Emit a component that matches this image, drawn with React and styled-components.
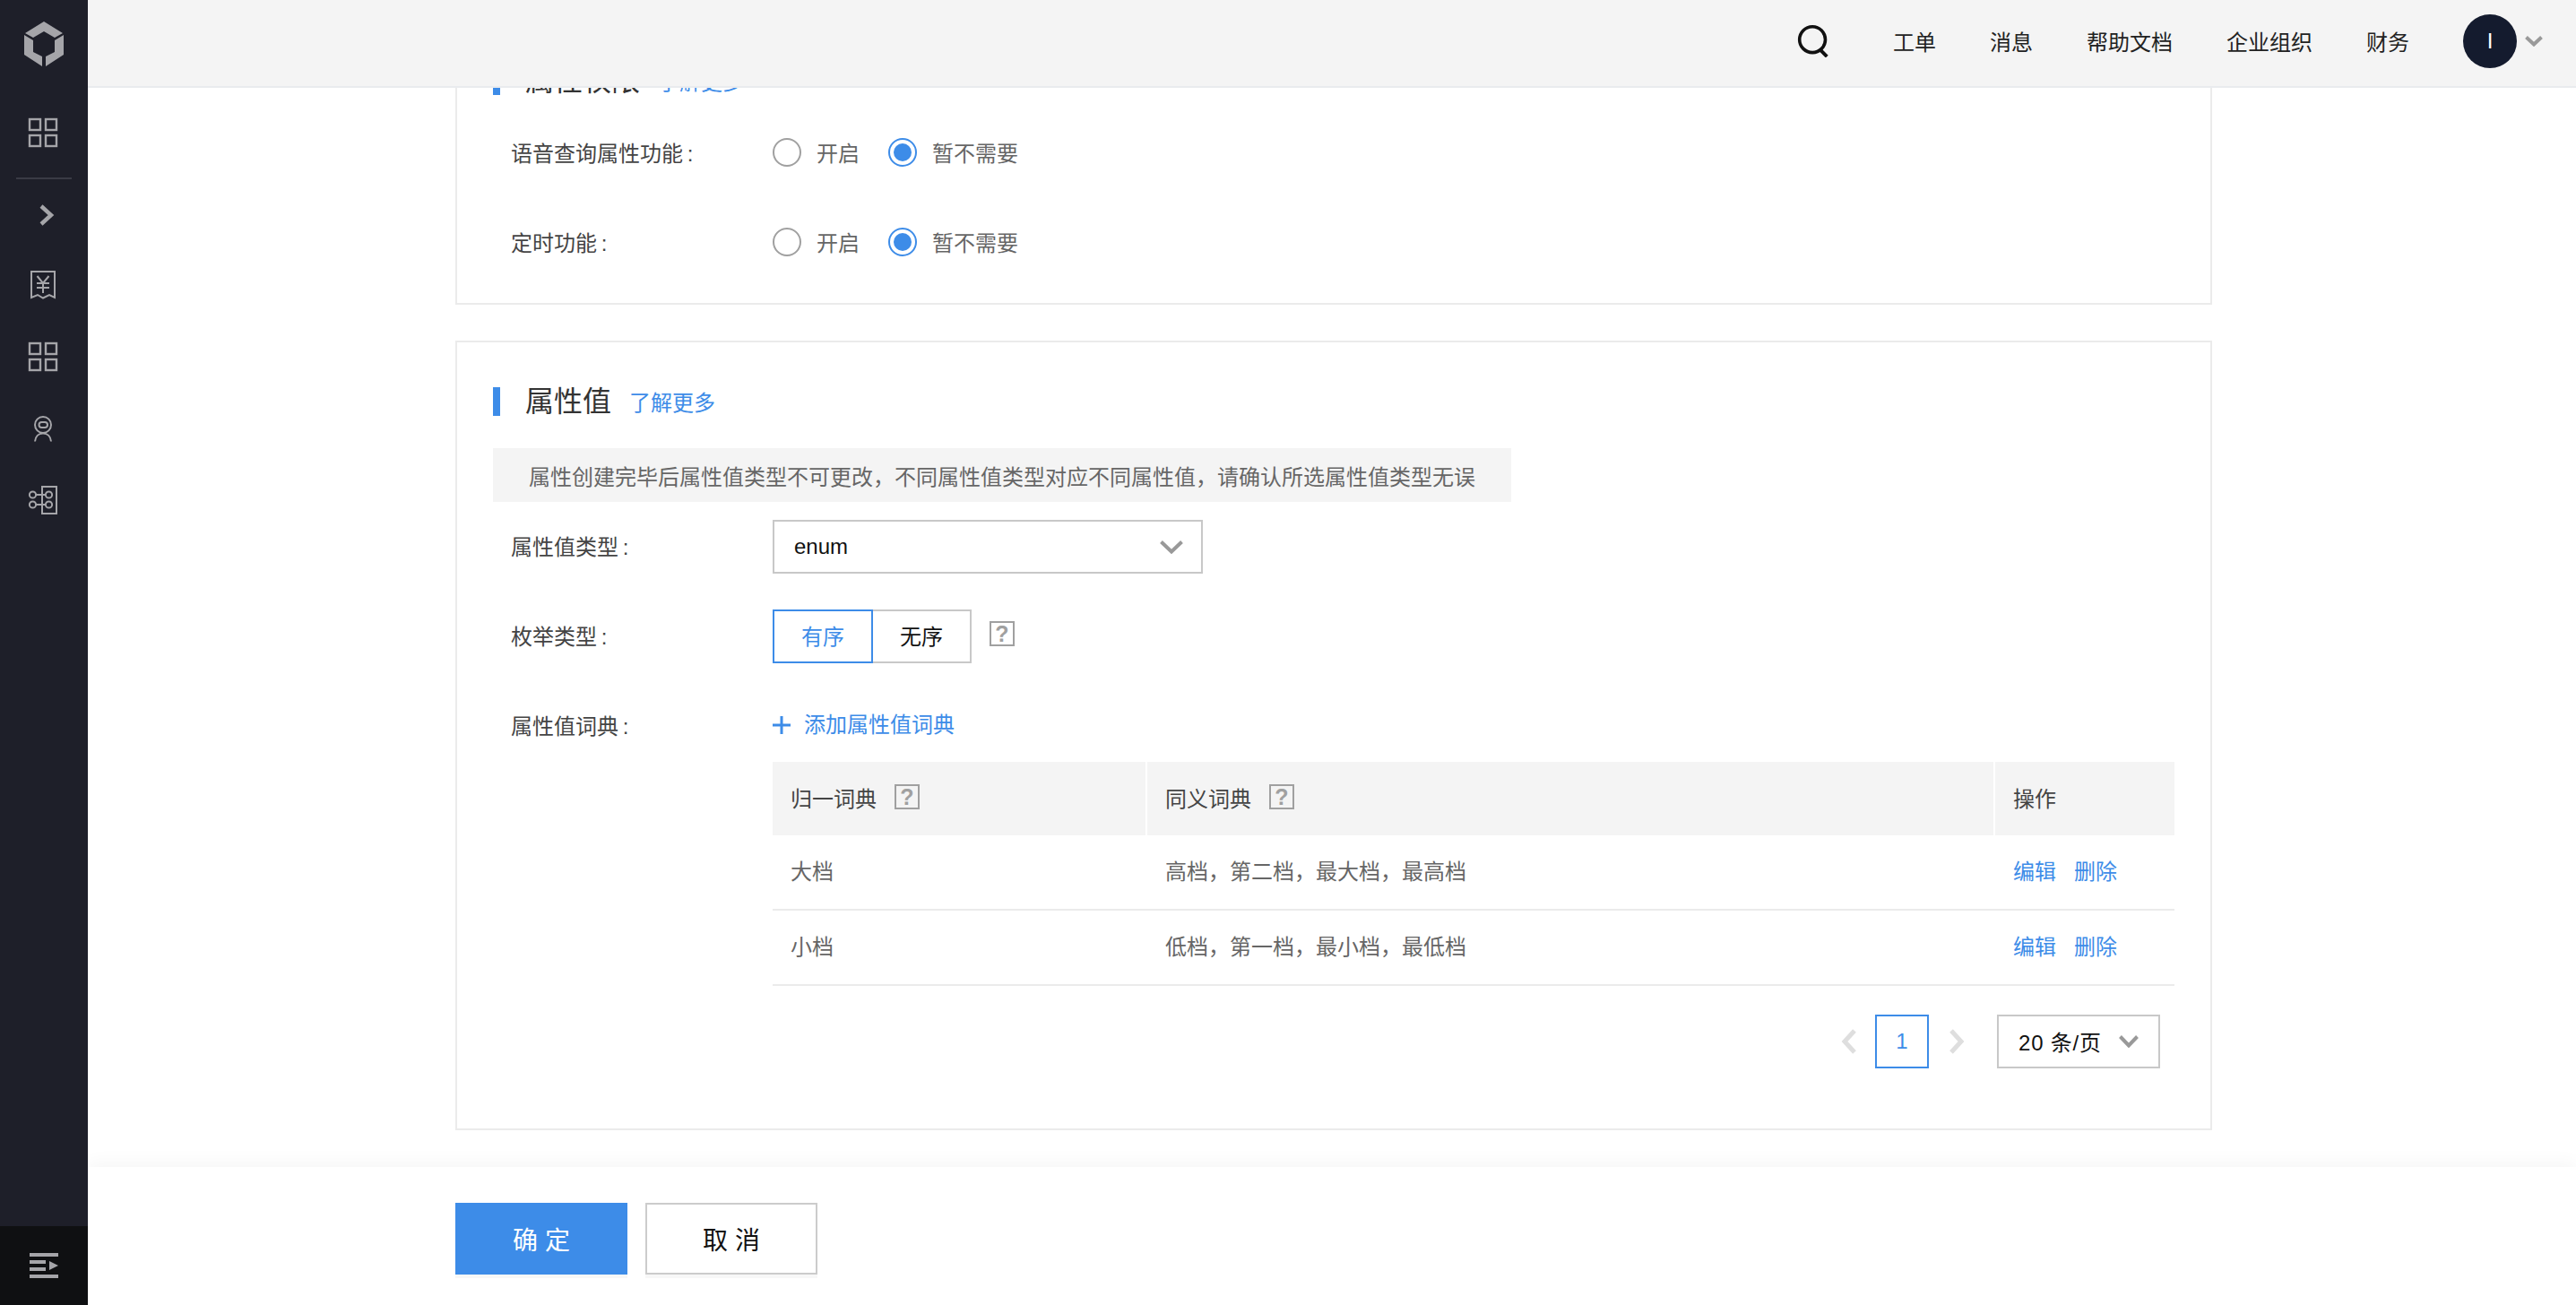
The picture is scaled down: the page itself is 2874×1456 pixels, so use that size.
import React from "react";
import styled, { createGlobalStyle } from "styled-components";

const BLUE = "#3d8ce8";
const COLS = "416px 944px 200px";

const Global = createGlobalStyle`
  html, body { margin: 0; padding: 0; height: 100%; overflow: hidden; background: #fff; }
  body { font-family: "Liberation Sans", "Noto Sans CJK SC", sans-serif; font-size: 24px; color: #333; }
  * { box-sizing: border-box; }
`;

const Shell = styled.div`display: flex; width: 2874px; height: 1456px; overflow: hidden;`;

const Sidebar = styled.aside`
  position: relative; z-index: 2;
  flex: none; width: 98px; height: 100%; background: #1e1f29;
  display: flex; flex-direction: column; color: #a5a5a9;
`;
const LogoBox = styled.div`height: 98px; display: flex; align-items: center; justify-content: center;`;
const SideItem = styled.div`
  height: 80px; flex: none; display: flex; align-items: center; justify-content: center;
  margin-top: ${(p) => p.$top || 0}px;
`;
const SideRule = styled.div`flex: none; height: 2px; margin: 10px 18px 0; background: #3a3b45;`;
const SideBottom = styled.div`
  margin-top: auto; height: 88px; background: #0f1012;
  display: flex; align-items: center; justify-content: center;
`;

const Main = styled.div`flex: 1; min-width: 0; display: flex; flex-direction: column; height: 100%;`;
const Header = styled.header`
  position: relative; z-index: 1; flex: none; height: 98px; background: #f4f4f4; border-bottom: 2px solid #e9ebee;
  display: flex; align-items: center; justify-content: flex-end; padding: 0 37px 4px 0;
`;
const SearchWrap = styled.div`display: flex; margin-right: 71px;`;
const NavList = styled.nav`display: flex; gap: 60px; margin-right: 60px; margin-top: 4px;`;
const NavLink = styled.span`color: #222; font-size: 24px; line-height: 34px;`;
const Avatar = styled.div`
  width: 60px; height: 60px; border-radius: 50%; background: #141b2e; color: #fff;
  display: flex; align-items: center; justify-content: center; font-size: 24px; margin-right: 9px;
`;

const Scroller = styled.main`flex: 1; min-height: 0; overflow: hidden;`;
const Content = styled.div`
  width: 1960px; margin: -76px 0 0 410px;
  display: flex; flex-direction: column; gap: 40px;
`;
const Card = styled.section`
  border: 2px solid #ebebeb; padding: 50px 40px ${(p) => p.$bottom}px 40px;
`;
const TitleRow = styled.div`display: flex; align-items: center; height: 32px; margin-bottom: ${(p) => p.$gap}px;`;
const TitleBar = styled.span`width: 8px; height: 32px; background: ${BLUE}; margin-right: 28px;`;
const Title = styled.h2`margin: 0; font-size: 32px; font-weight: 400; color: #333; line-height: 32px;`;
const TextLink = styled.a`color: ${BLUE}; font-size: 24px; line-height: 34px;`;
const TitleLink = styled(TextLink)`margin: 4px 0 0 20px;`;

const Notice = styled.div`
  width: 1136px; height: 60px; background: #f4f4f4; color: #666; font-size: 24px;
  display: flex; align-items: center; padding-left: 40px; margin-bottom: 20px; white-space: nowrap;
`;
const FormRow = styled.div`
  display: flex; align-items: center; height: 60px;
  margin-bottom: ${(p) => (p.$last ? 10 : 40)}px;
`;
const Label = styled.label`
  flex: none; width: 312px; padding: 0 0 ${(p) => (p.$tight ? 2 : 4)}px 20px; color: #444; font-size: 24px; word-spacing: -2px;
`;

const RadioGroup = styled.div`display: flex; align-items: center;`;
const RadioDot = styled.span`
  flex: none; width: 32px; height: 32px; border-radius: 50%;
  border: 2px solid ${(p) => (p.$on ? BLUE : "#a0a0a0")};
  display: flex; align-items: center; justify-content: center;
  margin-right: 16px;
  &::after { content: ""; width: 20px; height: 20px; border-radius: 50%; background: ${(p) => (p.$on ? BLUE : "transparent")}; }
`;
const RadioText = styled.span`color: #666; font-size: 24px; margin: -2px 32px 0 1px;`;

const SelectBox = styled.div`
  width: ${(p) => p.$w}px; height: 60px; border: 2px solid #c8c8c8; background: #fff; color: #111;
  display: flex; align-items: center; justify-content: space-between; font-size: 24px;
  padding: 0 ${(p) => p.$pr}px 0 ${(p) => p.$pl}px;
`;
const Segments = styled.div`display: flex;`;
const Segment = styled.div`
  width: ${(p) => (p.$on ? 112 : 110)}px; height: 60px; display: flex; align-items: center; justify-content: center;
  font-size: 24px; color: ${(p) => (p.$on ? BLUE : "#111")}; padding-bottom: 4px;
  border: 2px solid ${(p) => (p.$on ? BLUE : "#c8c8c8")};
  ${(p) => (p.$on ? "" : "border-left: 0;")}
`;
const Help = styled.span`
  flex: none; width: 28px; height: 28px; border: 2px solid #a0a0a0; color: #a0a0a0; background: #fff;
  display: inline-flex; align-items: center; justify-content: center;
  font-size: 25px; font-weight: 700; line-height: 1; margin-left: ${(p) => p.$left}px;
  margin-top: ${(p) => p.$top || 0}px;
`;
const HeadHelp = styled(Help)`background: transparent;`;
const AddLink = styled(TextLink)`display: flex; align-items: center; gap: 15px; margin-top: -2px;`;

const Table = styled.div`width: 1564px; margin-left: 312px;`;
const HeadRow = styled.div`display: grid; grid-template-columns: ${COLS}; column-gap: 2px; height: 82px;`;
const HeadCell = styled.div`
  background: #f4f4f4; color: #444; display: flex; align-items: center; padding: 0 0 4px 20px; font-size: 24px;
`;
const BodyRow = styled.div`
  display: grid; grid-template-columns: ${COLS}; column-gap: 2px; height: 84px; border-bottom: 2px solid #ebebeb;
  align-items: center;
`;
const Cell = styled.div`padding-left: 20px; color: #666; font-size: 24px; line-height: 34px; display: flex; gap: 20px;`;

const Pager = styled.div`
  display: flex; align-items: center; justify-content: flex-end; margin-top: 32px; padding-right: 16px;
`;
const PageNum = styled.div`
  width: 60px; height: 60px; border: 2px solid ${BLUE}; color: ${BLUE}; font-size: 24px;
  display: flex; align-items: center; justify-content: center; margin: 0 22px 0 20px;
`;
const PerPage = styled.span`letter-spacing: 0.8px; margin-top: -2px;`;
const PagerGap = styled.div`width: 36px;`;

const Footer = styled.footer`
  position: relative; z-index: 1; flex: none; height: 154px; background: #fff;
  box-shadow: 0 -6px 18px rgba(0, 0, 0, 0.035);
  display: flex; gap: 20px; padding: 40px 0 0 410px;
`;
const FootButton = styled.button`
  width: 192px; height: 80px; font-family: inherit; font-size: 28px; letter-spacing: 8px; padding: 0 0 0 8px;
  background: ${(p) => (p.$primary ? BLUE : "#fff")}; color: ${(p) => (p.$primary ? "#fff" : "#111")};
  border: 2px solid ${(p) => (p.$primary ? BLUE : "#ccc")};
  box-shadow: 0 4px 0 #f7f7f7;
`;

const Logo = () => (
  <svg width="46" height="52" viewBox="25 22 46 52" fill="#a5a5a9">
    <path d="M48 23 L69 36 L60 41 L48 34 L36 41 L27 36 Z" />
    <path d="M26 38 V60 L46 73 V62 L36 57 V44 Z" />
    <path d="M70 38 V60 L50 73 V62 L60 57 V44 Z" />
  </svg>
);
const GridIcon = ({ shift = 0 }) => (
  <svg width="50" height="50" viewBox={`0 ${shift} 50 50`} fill="none" stroke="currentColor" strokeWidth="2.4">
    <rect x="9" y="10" width="12" height="12" />
    <rect x="27" y="10" width="12" height="12" />
    <rect x="9" y="28" width="12" height="12" />
    <rect x="27" y="28" width="12" height="12" />
  </svg>
);
const SideChevron = () => (
  <svg width="50" height="50" viewBox="0 0 50 50" fill="none" stroke="currentColor" strokeWidth="4.4">
    <path d="M22 15 L33 25 L22 35" />
  </svg>
);
const Receipt = () => (
  <svg width="50" height="50" viewBox="0 0 50 50" fill="none" stroke="currentColor" strokeWidth="2">
    <path d="M11 37 V8 H37 V37 L31 34 L24 37.5 L18 34 Z" />
    <path d="M17.5 13 L24 21 L30.5 13 M17 21 H31 M17 26 H31 M24 21 V32" />
  </svg>
);
const Robot = () => (
  <svg width="50" height="50" viewBox="0 0 50 50" fill="none" stroke="currentColor" strokeWidth="2">
    <circle cx="24" cy="19" r="9" />
    <rect x="19.5" y="16" width="9.5" height="6" rx="3" />
    <path d="M15 37.5 C15.5 32 19 28.5 24 28.5 C29 28.5 32.5 32 33 37.5" />
  </svg>
);
const Org = () => (
  <svg width="50" height="50" viewBox="0 1 50 50" fill="none" stroke="currentColor" strokeWidth="2">
    <rect x="23" y="9" width="16" height="30" />
    <circle cx="12.5" cy="18" r="3.6" />
    <circle cx="12.5" cy="29" r="3.6" />
    <circle cx="30.5" cy="18" r="3.6" />
    <circle cx="30.5" cy="29" r="3.6" />
    <path d="M16 18 H27 M16 29 H27" />
  </svg>
);
const Collapse = () => (
  <svg width="32" height="28" viewBox="0 0 32 28" fill="#a5a5a9">
    <rect x="0" y="0" width="32" height="4" />
    <rect x="0" y="8" width="18" height="4" />
    <rect x="0" y="16" width="18" height="4" />
    <rect x="0" y="24" width="32" height="4" />
    <path d="M22 9 L32 14 L22 19 Z" />
  </svg>
);
const Search = () => (
  <svg width="36" height="36" viewBox="0 0 40 40" fill="none" stroke="#111" strokeWidth="4">
    <circle cx="19" cy="18" r="16" />
    <path d="M29 31 L37 39" strokeWidth="4.4" />
  </svg>
);
const Chevron = ({ w = 24, h = 14, color = "#999", sw = 4 }) => (
  <svg width={w} height={h} viewBox={`0 0 ${w} ${h}`} fill="none" stroke={color} strokeWidth={sw}>
    <path d={`M1.5 1.5 L${w / 2} ${h - 2.5} L${w - 1.5} 1.5`} />
  </svg>
);
const PageArrow = ({ left }) => (
  <svg width="18" height="28" viewBox="0 0 18 28" fill="none" stroke="#dedede" strokeWidth="5">
    <path d={left ? "M15 2 L4 14 L15 26" : "M3 2 L14 14 L3 26"} />
  </svg>
);
const Plus = () => (
  <svg width="20" height="20" viewBox="0 0 20 20" fill={BLUE}>
    <rect x="0" y="8.5" width="20" height="3" />
    <rect x="8.5" y="0" width="3" height="20" />
  </svg>
);

const RadioPair = () => (
  <RadioGroup>
    <RadioDot />
    <RadioText>开启</RadioText>
    <RadioDot $on />
    <RadioText>暂不需要</RadioText>
  </RadioGroup>
);

const rows = [
  ["大档", "高档，第二档，最大档，最高档"],
  ["小档", "低档，第一档，最小档，最低档"],
];

export default function App() {
  return (
    <Shell>
      <Global />
      <Sidebar>
        <LogoBox><Logo /></LogoBox>
        <SideItem $top={10}><GridIcon /></SideItem>
        <SideRule />
        <SideItem><SideChevron /></SideItem>
        <SideItem><Receipt /></SideItem>
        <SideItem><GridIcon shift={2} /></SideItem>
        <SideItem><Robot /></SideItem>
        <SideItem><Org /></SideItem>
        <SideBottom><Collapse /></SideBottom>
      </Sidebar>
      <Main>
        <Header>
          <SearchWrap><Search /></SearchWrap>
          <NavList>
            <NavLink>工单</NavLink>
            <NavLink>消息</NavLink>
            <NavLink>帮助文档</NavLink>
            <NavLink>企业组织</NavLink>
            <NavLink>财务</NavLink>
          </NavList>
          <Avatar>I</Avatar>
          <Chevron w={20} h={12} />
        </Header>
        <Scroller>
          <Content>
            <Card $bottom={28}>
              <TitleRow $gap={34}>
                <TitleBar />
                <Title>属性权限</Title>
                <TitleLink>了解更多</TitleLink>
              </TitleRow>
              <FormRow>
                <Label $tight>语音查询属性功能 :</Label>
                <RadioPair />
              </FormRow>
              <FormRow $last>
                <Label $tight>定时功能 :</Label>
                <RadioPair />
              </FormRow>
            </Card>
            <Card $bottom={67}>
              <TitleRow $gap={36}>
                <TitleBar />
                <Title>属性值</Title>
                <TitleLink>了解更多</TitleLink>
              </TitleRow>
              <Notice>属性创建完毕后属性值类型不可更改，不同属性值类型对应不同属性值，请确认所选属性值类型无误</Notice>
              <FormRow>
                <Label>属性值类型 :</Label>
                <SelectBox $w={480} $pl={22} $pr={20}>
                  <span>enum</span>
                  <Chevron w={26} h={15} />
                </SelectBox>
              </FormRow>
              <FormRow>
                <Label>枚举类型 :</Label>
                <Segments>
                  <Segment $on>有序</Segment>
                  <Segment>无序</Segment>
                </Segments>
                <Help $left={20} $top={-6}>?</Help>
              </FormRow>
              <FormRow $last>
                <Label>属性值词典 :</Label>
                <AddLink><Plus />添加属性值词典</AddLink>
              </FormRow>
              <Table>
                <HeadRow>
                  <HeadCell>归一词典<HeadHelp $left={20}>?</HeadHelp></HeadCell>
                  <HeadCell>同义词典<HeadHelp $left={20}>?</HeadHelp></HeadCell>
                  <HeadCell>操作</HeadCell>
                </HeadRow>
                {rows.map(([a, b]) => (
                  <BodyRow key={a}>
                    <Cell>{a}</Cell>
                    <Cell>{b}</Cell>
                    <Cell>
                      <TextLink>编辑</TextLink>
                      <TextLink>删除</TextLink>
                    </Cell>
                  </BodyRow>
                ))}
              </Table>
              <Pager>
                <PageArrow left />
                <PageNum>1</PageNum>
                <PageArrow />
                <PagerGap />
                <SelectBox $w={182} $pl={22} $pr={22}>
                  <PerPage>20 条/页</PerPage>
                  <Chevron w={22} h={14} />
                </SelectBox>
              </Pager>
            </Card>
          </Content>
        </Scroller>
        <Footer>
          <FootButton $primary>确定</FootButton>
          <FootButton>取消</FootButton>
        </Footer>
      </Main>
    </Shell>
  );
}
